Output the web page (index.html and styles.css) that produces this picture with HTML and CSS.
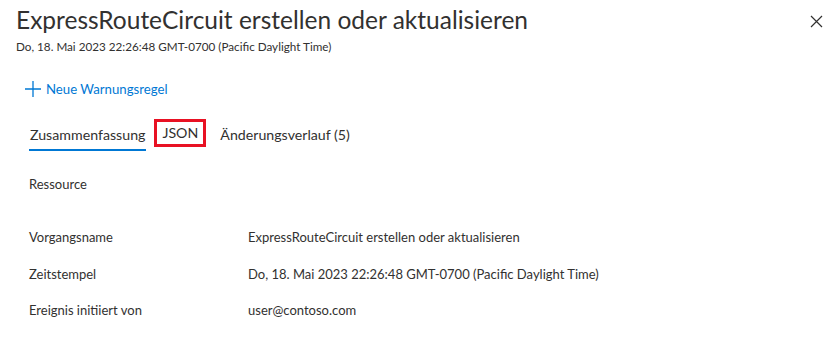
FILE: index.html
```html
<!DOCTYPE html>
<html>
<head>
	<title>ExpressRouteCircuit erstellen oder aktualisieren</title>
	<link rel="stylesheet" href="styles.css">
</head>
<body>
	<div class="blade">
		<div class="bladeHeader">
			<div class="titles">
				<h1 class="title">ExpressRouteCircuit erstellen oder aktualisieren</h1>
				<div class="subtitle">Do, 18. Mai 2023 22:26:48 GMT-0700 (Pacific Daylight Time)</div>
			</div>
			<button type="button" class="close" title="Schließen">
				<svg width="13" height="13" viewBox="0 0 13 13"><path d="M1 1 L12 12 M12 1 L1 12" stroke="#323130" stroke-width="1.2" fill="none"/></svg>
			</button>
		</div>

		<div class="content">
			<div class="commands">
				<button type="button" class="cmd">
					<svg width="16" height="16" viewBox="0 0 16 16"><path d="M8 0 V16 M0 8 H16" stroke="#0078d4" stroke-width="1.3" fill="none"/></svg>
					<span>Neue Warnungsregel</span>
				</button>
			</div>

			<div class="tabs">
				<div class="tab selected">Zusammenfassung</div>
				<div class="tab highlighted">JSON</div>
				<div class="tab">Änderungsverlauf (5)</div>
			</div>

			<div class="section">Ressource</div>

			<div class="props">
				<div class="label">Vorgangsname</div>
				<div class="value">ExpressRouteCircuit erstellen oder aktualisieren</div>
				<div class="label">Zeitstempel</div>
				<div class="value">Do, 18. Mai 2023 22:26:48 GMT-0700 (Pacific Daylight Time)</div>
				<div class="label">Ereignis initiiert von</div>
				<div class="value">user@contoso.com</div>
			</div>
		</div>
	</div>
</body>
</html>
```

FILE: styles.css
```css
body {
	margin: 0;
	background-color: #ffffff;
	font-family: "Lato", "Open Sans", sans-serif;
	color: #323130;
}

.blade {
	width: 838px;
	height: 350px;
	overflow: hidden;
}

.bladeHeader {
	display: flex;
	justify-content: space-between;
	align-items: flex-start;
	padding: 4px 12px 0 16px;
}

.title {
	margin: 0;
	font-size: 24.5px;
	font-weight: 400;
	line-height: 32px;
	color: #323130;
}

.subtitle {
	font-size: 11.7px;
	line-height: 16px;
	color: #323130;
	margin-top: 2px;
}

.close {
	background: none;
	border: none;
	padding: 0;
	margin-top: 7px;
	width: 20px;
	height: 20px;
	display: flex;
	align-items: center;
	justify-content: center;
	cursor: pointer;
}

.content {
	padding: 0 0 0 29px;
}

.commands {
	margin-top: 19px;
	display: flex;
	align-items: center;
	height: 32px;
	margin-left: -4px;
}

.cmd {
	background: none;
	border: none;
	padding: 0;
	display: flex;
	align-items: center;
	gap: 5px;
	color: #0078d4;
	font-family: inherit;
	font-size: 13.2px;
	cursor: pointer;
}

.tabs {
	display: flex;
	align-items: stretch;
	margin-top: 14px;
	height: 32px;
	gap: 8px;
}

.tab {
	font-size: 14.2px;
	line-height: 28px;
	padding: 2px 1px 0 1px;
	color: #323130;
	box-sizing: border-box;
	border-bottom: 2px solid transparent;
}

.tab.selected {
	border-bottom-color: #0078d4;
}

.tab.highlighted {
	border: 3px solid #e81123;
	line-height: 22px;
	padding: 0 5px;
	height: 28px;
	margin-right: 5px;
}

.section {
	font-size: 13px;
	line-height: 20px;
	margin-top: 23px;
}

.props {
	display: grid;
	grid-template-columns: 219px 1fr;
	grid-auto-rows: 36.5px;
	align-items: center;
	margin-top: 25px;
	font-size: 13px;
}
```
